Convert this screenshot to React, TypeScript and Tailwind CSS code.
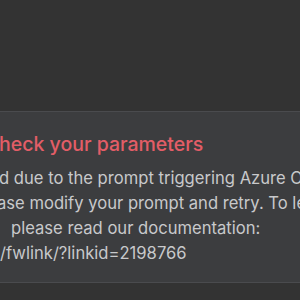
import React from 'react';

const lines = [
  { text: 'd due to the prompt triggering Azure OpenAI', indent: 'ml-0' },
  { text: 'ase modify your prompt and retry. To learn', indent: '-ml-[2px]' },
  { text: 'please read our documentation:', indent: 'ml-[12px]' },
  { text: '/fwlink/?linkid=2198766', indent: 'ml-[1px]' },
];

const App: React.FC = () => {
  return (
    <div
      className="w-[300px] h-[300px] overflow-hidden bg-[#333333] flex flex-col"
      style={{ fontFamily: 'Inter, "Noto Sans", sans-serif' }}
    >
      {/* Backdrop above the dialog */}
      <div className="h-[111px] shrink-0" />

      {/* Error dialog body, cropped on the left */}
      <div className="h-[172px] shrink-0 border-y border-[#4a4b4e] bg-[#3c3d3f] overflow-hidden">
        <div className="pt-[18px] -ml-[1px]">
          <h2 className="whitespace-nowrap text-[19.5px] leading-[28px] font-medium text-[#e35d67]">
            heck your parameters
          </h2>
          <div className="mt-[8px] text-[16.6px] leading-[25px] text-[#c8c9cb]">
            {lines.map((line) => (
              <div key={line.text} className={`whitespace-nowrap ${line.indent}`}>
                {line.text}
              </div>
            ))}
          </div>
        </div>
      </div>
    </div>
  );
};

export default App;
